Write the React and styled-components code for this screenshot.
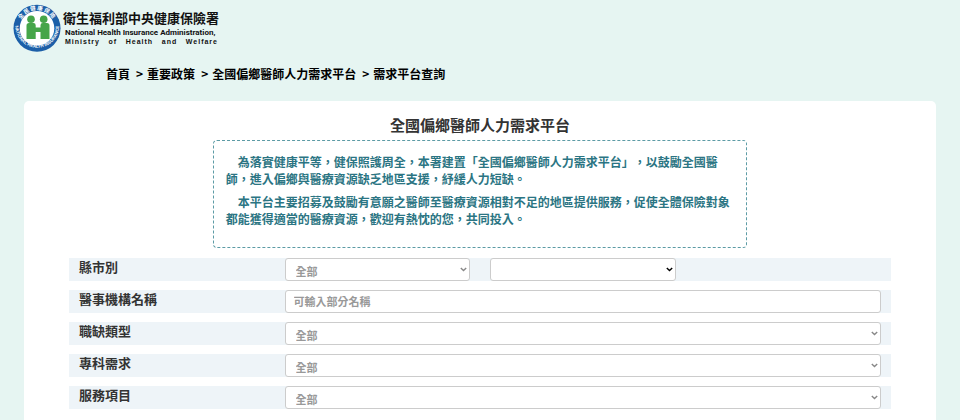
import React from "react";
import styled, { createGlobalStyle } from "styled-components";

const GlobalStyle = createGlobalStyle`
  * {
    box-sizing: border-box;
  }

  body {
    margin: 0;
    background-color: #e6f5f2;
    color: #333333;
    font-family: "Noto Sans CJK TC", sans-serif;
    font-size: 12px;
    font-weight: 700;
    text-spacing-trim: space-all;
  }
`;

const Header = styled.header`
  padding: 4px 13px 0;
`;

const Brand = styled.a`
  display: inline-flex;
  align-items: flex-start;
  gap: 2px;
  color: #111111;
  text-decoration: none;
`;

const Emblem = styled.svg`
  width: 48px;
  height: 48px;
  flex-shrink: 0;
`;

const BrandText = styled.span`
  display: flex;
  flex-direction: column;
  padding-top: 4px;
`;

const BrandName = styled.span`
  font-size: 13px;
  line-height: 20px;
`;

const BrandEnglish = styled.span`
  display: flex;
  justify-content: space-between;
  padding: 0 1px 0 2px;
  font-family: ${props => props.$spaced ? '"Liberation Sans"' : 'Roboto'}, sans-serif;
  font-size: ${props => props.$spaced ? '7px' : '8px'};
  line-height: 9px;
  letter-spacing: ${props => props.$spaced ? '1px' : 'normal'};
  white-space: nowrap;
`;

const Breadcrumb = styled.nav`
  padding: 10px 24px 0 106px;
  line-height: 18px;

  ol {
    display: flex;
    margin: 0;
    padding: 0;
    list-style: none;
  }

  li + li::before {
    content: ">";
    margin: 0 4px 0 6px;
  }

  a {
    color: #000000;
    text-decoration: none;
  }

  li {
    color: #000000;
  }
`;

const Card = styled.main`
  margin: 18px 24px 0;
  padding: 14px 45px 40px;
  background-color: #ffffff;
  border-radius: 5px;
`;

const Title = styled.h1`
  margin: 0;
  font-size: 15px;
  line-height: 20px;
  text-align: center;
`;

const Notice = styled.div`
  width: 65%;
  margin: 5px auto 10px;
  padding: 12px 12px 20px;
  border: 1px dashed #5c9ba5;
  border-radius: 4px;
  color: #2b7583;
`;

const Paragraph = styled.p`
  margin: 0;
  line-height: 17px;
  text-indent: 1em;

  & + & {
    margin-top: 6px;
  }
`;

const Form = styled.form`
  display: flex;
  flex-direction: column;
  gap: 9px;
`;

const Row = styled.div`
  display: grid;
  grid-template-columns: repeat(4, 1fr);
  background-color: #eef4f8;
`;

const Label = styled.label`
  padding-left: 10px;
  font-size: 13px;
  line-height: 18px;
`;

const Cell = styled.div`
  display: flex;
  grid-column: span ${props => props.$span || 1};
  padding: 0 10px;
`;

const chevron = color =>
  `url("data:image/svg+xml,%3Csvg xmlns='http://www.w3.org/2000/svg' viewBox='0 0 7 5'%3E%3Cpath d='M.8 1l2.700 2.600L6.200 1' fill='none' stroke='${color}' stroke-width='1.400'/%3E%3C/svg%3E")`;

const Select = styled.select`
  appearance: none;
  width: 100%;
  height: 23px;
  padding: 2px 12px 0 10px;
  border: 1px solid #cccccc;
  border-radius: 3px;
  background: #ffffff ${props => chevron(props.$muted ? '%23888888' : '%23000000')} no-repeat right 2px center / 7px 5px;
  color: ${props => props.$muted ? '#999999' : '#000000'};
  font: 700 11px "Noto Sans CJK TC", sans-serif;
`;

const Input = styled.input`
  width: 100%;
  height: 23px;
  padding: 0 8px 2px;
  border: 1px solid #cccccc;
  border-radius: 3px;
  background-color: #ffffff;
  color: #333333;
  font: 700 11px "Noto Sans CJK TC", sans-serif;

  &::placeholder {
    color: #999999;
    opacity: 1;
  }
`;

const crumbs = ["首頁", "重要政策", "全國偏鄉醫師人力需求平台"];

const filters = [
   { id: "vacancy", label: "職缺類型" },
   { id: "specialty", label: "專科需求" },
   { id: "service", label: "服務項目" }
];

function Logo() {
   return (
      <Emblem viewBox="0 0 48 48" aria-hidden="true">
         <defs>
            <path id="ring-top" d="M6 24a18 18 0 0 1 36 0" />
            <path id="ring-bottom" d="M2.400 22a21.800 21.800 0 0 0 43.600 0" />
         </defs>
         <circle cx="24" cy="24.300" r="23.500" fill="#1c5fa8" />
         <circle cx="24" cy="24.300" r="17.300" fill="#ffffff" />
         <g fill="#ffffff" fontWeight="700" textAnchor="middle">
            <text fontSize="5.500" letterSpacing="1" fontFamily="Noto Sans CJK TC">
               <textPath href="#ring-top" startOffset="50%">全民健康保險</textPath>
            </text>
            <text fontSize="4.400" fontFamily="Liberation Sans">
               <textPath href="#ring-bottom" startOffset="50%">NATIONAL HEALTH INSURANCE</textPath>
            </text>
         </g>
         <g fill="#45a549">
            <circle cx="18" cy="15.300" r="3.800" />
            <circle cx="30.700" cy="15.300" r="3.800" />
            <path d="M13.500 21.500q0-2.500 2.500-2.500h4.500q2.200 0 2.200 2.200v2.300h4.800v-2.300q0-2.200 2.200-2.200h4.300q2.500 0 2.500 2.500v13.500h-9v-7h-4.800v7h-9.200z" />
         </g>
      </Emblem>
   );
}

function App() {
   return (
      <>
         <GlobalStyle />
         <Header>
            <Brand href="#">
               <Logo />
               <BrandText>
                  <BrandName>衛生福利部中央健康保險署</BrandName>
                  <BrandEnglish>National Health Insurance Administration,</BrandEnglish>
                  <BrandEnglish $spaced>
                     <span>Ministry</span> <span>of</span> <span>Health</span> <span>and</span> <span>Welfare</span>
                  </BrandEnglish>
               </BrandText>
            </Brand>
         </Header>
         <Breadcrumb aria-label="導覽路徑">
            <ol>
               {crumbs.map(crumb => (
                  <li key={crumb}>
                     <a href="#">{crumb}</a>
                  </li>
               ))}
               <li aria-current="page">需求平台查詢</li>
            </ol>
         </Breadcrumb>
         <Card>
            <Title>全國偏鄉醫師人力需求平台</Title>
            <Notice>
               <Paragraph>
                  為落實健康平等，健保照護周全，本署建置「全國偏鄉醫師人力需求平台」，以鼓勵全國醫師，進入偏鄉與醫療資源缺乏地區支援，紓緩人力短缺。
               </Paragraph>
               <Paragraph>
                  本平台主要招募及鼓勵有意願之醫師至醫療資源相對不足的地區提供服務，促使全體保險對象都能獲得適當的醫療資源，歡迎有熱忱的您，共同投入。
               </Paragraph>
            </Notice>
            <Form>
               <Row>
                  <Label htmlFor="city">縣市別</Label>
                  <Cell>
                     <Select id="city" $muted>
                        <option>全部</option>
                     </Select>
                  </Cell>
                  <Cell>
                     <Select aria-label="鄉鎮市區" />
                  </Cell>
               </Row>
               <Row>
                  <Label htmlFor="hospital">醫事機構名稱</Label>
                  <Cell $span={3}>
                     <Input id="hospital" type="text" placeholder="可輸入部分名稱" />
                  </Cell>
               </Row>
               {filters.map(({ id, label }) => (
                  <Row key={id}>
                     <Label htmlFor={id}>{label}</Label>
                     <Cell $span={3}>
                        <Select id={id} $muted>
                           <option>全部</option>
                        </Select>
                     </Cell>
                  </Row>
               ))}
            </Form>
         </Card>
      </>
   );
}

export default App;
